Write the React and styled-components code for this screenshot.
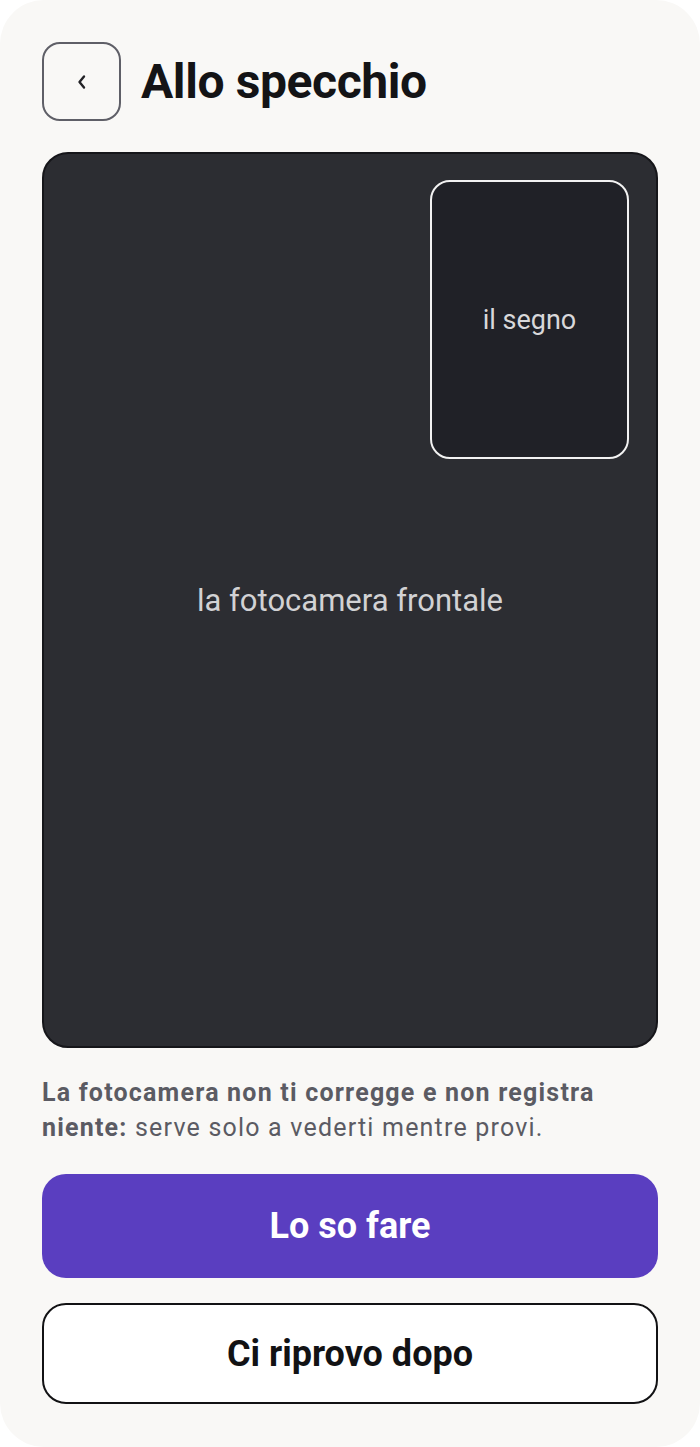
import React from 'react'
import styled, {createGlobalStyle} from 'styled-components'

const GlobalStyle = createGlobalStyle`
    * { box-sizing: border-box; }
    html, body { margin: 0; padding: 0; background: #ffffff; }
    body { font-family: Roboto, "Noto Sans", sans-serif; }
`;

const Screen = styled.div`
    width: 700px;
    height: 1447px;
    background: #f9f8f6;
    border-radius: 44px;
    padding: 42px 42px 43px;
    display: flex;
    flex-direction: column;
    & > * { flex-shrink: 0; }
`;

const Header = styled.header`
    display: flex;
    align-items: center;
    gap: 20px;
    height: 79px;
`;

const BackButton = styled.button`
    width: 79px;
    height: 79px;
    border: 2px solid #5f5f67;
    border-radius: 18px;
    background: transparent;
    display: flex;
    align-items: center;
    justify-content: center;
    padding: 0;
    color: #222226;
    svg { display: block; }
`;

const Title = styled.h1`
    margin: 0;
    font-size: 48px;
    font-weight: 700;
    letter-spacing: -0.4px;
    color: #141416;
`;

const Camera = styled.div`
    margin-top: 31px;
    height: 896px;
    background: #2c2d32;
    border: 2px solid #16161a;
    border-radius: 26px;
    position: relative;
    display: flex;
    align-items: center;
    justify-content: center;
`;

const CameraLabel = styled.span`
    font-size: 31px;
    color: #d2d2d4;
`;

const Sign = styled.div`
    position: absolute;
    top: 26px;
    right: 27px;
    width: 199px;
    height: 279px;
    background: #202127;
    border: 2px solid #f2f2f2;
    border-radius: 20px;
    display: flex;
    align-items: center;
    justify-content: center;
`;

const SignLabel = styled.span`
    font-size: 27px;
    color: #d8d8da;
`;

const Note = styled.p`
    margin: 27px 0 0;
    font-size: 25px;
    line-height: 35px;
    letter-spacing: 1.2px;
    color: #5b5b63;
    b { font-weight: 700; }
`;

const Button = styled.button`
    width: 100%;
    height: ${props => props.primary ? "104px" : "101px"};
    margin-top: ${props => props.primary ? "29px" : "25px"};
    border-radius: 24px;
    border: ${props => props.primary ? "none" : "2px solid #121214"};
    background: ${props => props.primary ? "#5a3ec0" : "#ffffff"};
    color: ${props => props.primary ? "#ffffff" : "#121214"};
    font-family: Roboto, "Noto Sans", sans-serif;
    font-size: 36px;
    font-weight: 700;
`;

const IcoChevronLeft = () => <svg width={10} height={16} viewBox="0 0 10 16" fill="none" stroke="currentColor" strokeWidth="2.4" strokeLinecap="round" strokeLinejoin="round"><polyline points="7 2.5 2.5 8 7 13.5"></polyline></svg>

function App() {
    return (
        <>
            <GlobalStyle/>
            <Screen>
                <Header>
                    <BackButton aria-label="Indietro"><IcoChevronLeft/></BackButton>
                    <Title>Allo specchio</Title>
                </Header>
                <Camera>
                    <CameraLabel>la fotocamera frontale</CameraLabel>
                    <Sign><SignLabel>il segno</SignLabel></Sign>
                </Camera>
                <Note>
                    <b>La fotocamera non ti corregge e non registra</b> <b>niente:</b> serve solo a vederti mentre provi.
                </Note>
                <Button primary>Lo so fare</Button>
                <Button>Ci riprovo dopo</Button>
            </Screen>
        </>
    )
}

export default App
